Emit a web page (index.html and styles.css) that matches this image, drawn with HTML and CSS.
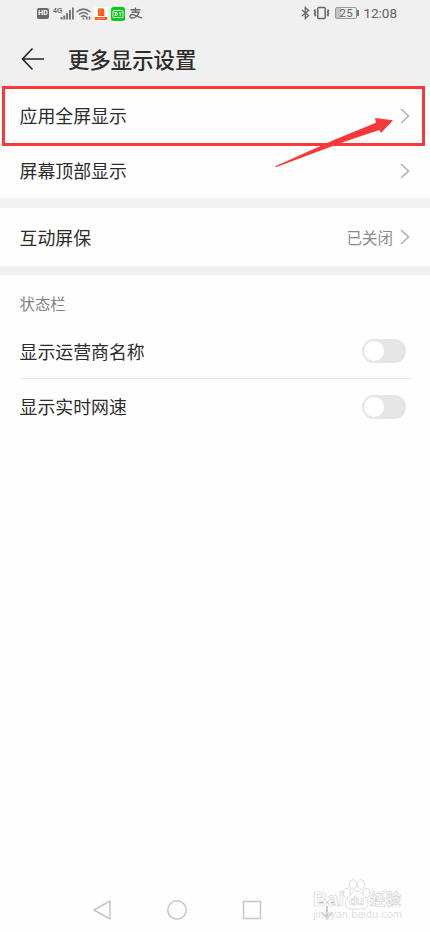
FILE: index.html
```html
<!DOCTYPE html>
<html lang="zh-CN">
<head>
<meta charset="utf-8">
<title>更多显示设置</title>
<link rel="stylesheet" href="styles.css">
</head>
<body>
<main class="screen">
  <header class="header">
    <div class="status">
      <div class="status-left">
        <span class="hd">HD</span>
        <svg class="signal" width="22" height="15" viewBox="0 0 22 15"><text x="0" y="7" class="net">4G</text><g fill="#777"><rect x="7.500" y="11" width="2" height="2.500"/><rect x="10.300" y="9.500" width="2" height="4"/><rect x="13.100" y="7" width="2" height="6.500"/><rect x="16" y="4" width="2" height="9.500"/><rect x="19" y="1.500" width="1.800" height="12"/></g></svg>
        <svg class="wifi" width="16" height="14" viewBox="0 0 16 14" fill="none" stroke="#737373" stroke-width="1.500"><path d="M.5 5Q7.500-.8 14.500 5M3 7.500Q7.500 3.500 12 7.500M5 10Q7.500 7.800 10 10"/><path d="M7.500 10.800v1.800M10.800 9.500v3M13.500 9.500v3" stroke-width="1.600"/></svg>
        <svg class="app" width="14" height="14" viewBox="0 0 14 14"><rect width="14" height="14" rx="2" fill="#fff"/><path d="M4 1.500h5.500l.8 1v6.500H4zM.8 10h12.400v3H.8z" fill="#ff5a10"/><path d="M6 3v4M3 11.500h8" stroke="#ffa67b" stroke-width=".8"/></svg>
        <svg class="app" width="14" height="14" viewBox="0 0 14 14"><rect width="14" height="14" rx="2.500" fill="#05cc18"/><g fill="none" stroke="#fff" stroke-width=".9"><rect x="2" y="3.500" width="10" height="7" rx=".8"/><path d="M3.500 5.500h2.500v3H3.500M4.500 5v4M8 5l1.200 1.500L10.500 5M9.200 6.500v2.500"/></g></svg>
        <svg class="pay" width="14" height="13" viewBox="0 0 14 13" fill="none" stroke="#686868" stroke-width="1.400"><path d="M1.500 2.700h10M6.500.5v5M2.500 5.300h7.500C9 9 5.500 11.500 2.500 11 .2 10.500.7 7.500 3.200 7.500c3 0 5.500 2.500 9.800 3.500"/></svg>
      </div>
      <div class="status-right">
        <svg width="9" height="14" viewBox="0 0 9 14" fill="none" stroke="#666" stroke-width="1.300"><path d="M1 4l6.500 5.500-3.200 3V1.500l3.200 3L1 10"/></svg>
        <svg class="vibrate" width="17" height="14" viewBox="0 0 17 14" fill="none" stroke="#666" stroke-width="1.500"><rect x="4.800" y="1.500" width="7.400" height="11" rx="1"/><path d="M2.500 3.500l-1 1.300 1 1.400-1 1.400 1 1.400-1 1.300M14.500 3.500l1 1.300-1 1.400 1 1.400-1 1.400 1 1.300"/></svg>
        <span class="battery">25</span><i class="battery-tip"></i>
        <span class="clock">12:08</span>
      </div>
    </div>
    <div class="title-row">
      <svg width="24" height="24" viewBox="0 0 24 24" fill="none" stroke="#222" stroke-width="1.600"><path d="M23 12H1.500M11.500 1.500L1.500 12l10 10.500"/></svg>
      <h1>更多显示设置</h1>
    </div>
  </header>
  <section class="group display">
    <div class="row"><span>应用全屏显示</span><svg class="chevron" width="10" height="18" viewBox="0 0 10 18"><path d="M1 2l7.500 7L1 16"/></svg></div>
    <div class="row"><span>屏幕顶部显示</span><svg class="chevron" width="10" height="18" viewBox="0 0 10 18"><path d="M1 2l7.500 7L1 16"/></svg></div>
    <div class="highlight"></div>
    <svg class="pointer" width="120" height="52" viewBox="0 0 120 52"><path fill="#fb3838" d="M.3 49.300L60 22.500 101 5.800 100 1l18 2.300L106 16l-1.600-3L70 24.500.7 50.200z"/></svg>
  </section>
  <section class="group saver">
    <div class="row"><span>互动屏保</span><span class="value">已关闭</span><svg class="chevron" width="10" height="18" viewBox="0 0 10 18"><path d="M1 2l7.500 7L1 16"/></svg></div>
  </section>
  <section class="group bar">
    <h2>状态栏</h2>
    <div class="row divided"><span>显示运营商名称</span><i class="toggle"></i></div>
    <div class="row"><span>显示实时网速</span><i class="toggle"></i></div>
  </section>
  <footer class="nav">
    <svg width="20" height="22" viewBox="0 0 20 22"><path d="M18 2v18L2 11z"/></svg>
    <svg width="22" height="22" viewBox="0 0 22 22"><circle cx="11" cy="11" r="9.200"/></svg>
    <svg width="20" height="22" viewBox="0 0 20 22"><rect x="1.500" y="2.500" width="17" height="17"/></svg>
    <svg class="down" width="18" height="22" viewBox="0 0 18 22"><path d="M1 3.500h16M9 7v12M3.500 13.500L9 19l5.500-5.500"/></svg>
    <svg class="watermark" width="96" height="48" viewBox="0 0 96 48">
      <text class="mark-bai" x="0" y="28" textLength="31" lengthAdjust="spacingAndGlyphs">Bai</text>
      <g class="mark-line"><ellipse cx="34" cy="15" rx="3.500" ry="4.500"/><ellipse cx="40" cy="6.500" rx="3.500" ry="4.800"/><ellipse cx="48" cy="6.500" rx="3.500" ry="4.800"/><ellipse cx="53.500" cy="15" rx="3.500" ry="4.500"/><path d="M43 13c-4 0-5 4-8 7-5 5-3 11 3 11h11c6 0 8-6 4-11-4-4-5-7-10-7z"/></g>
      <text class="mark-du" x="36" y="27" textLength="15">du</text>
      <text class="mark-cn" x="57" y="27" textLength="31">经验</text>
      <text class="mark-url" x="0" y="40" textLength="89">jingyan.baidu.com</text>
    </svg>
  </footer>
</main>
</body>
</html>
```
FILE: styles.css
```css
* { box-sizing: border-box; }
body {
  margin: 0;
  background: #fff;
  color: #2c2c2c;
  font-family: Roboto, "Noto Sans CJK SC", sans-serif;
}
svg { display: block; flex: none; }
.screen { width: 430px; height: 932px; display: flex; flex-direction: column; background: #fefefe; overflow: hidden; }
.header { height: 87px; background: #f0f0f0; flex: none; }
.status { height: 27px; padding: 0 33px 0 37px; display: flex; align-items: center; justify-content: space-between; }
.status-left, .status-right { display: flex; align-items: center; }
.status-right { height: 25px; align-self: flex-start; }
.hd { width: 12px; height: 11px; border-radius: 2px; background: #686868; color: #fff; font-size: 7px; font-weight: 700; line-height: 11px; text-align: center; }
.signal { margin-left: 4px; }
.net { font: 700 7px "Liberation Sans", sans-serif; fill: #666; }
.signal + .wifi { margin-left: 1px; }
.app { margin-left: 2px; }
.app + .app { margin-left: 3px; }
.pay { margin-left: 4px; }
.vibrate { margin-left: 3px; }
.battery { margin-left: 5px; width: 22px; height: 12px; border: 1px solid #999; border-radius: 2px; background: linear-gradient(90deg, #c3c3c3 25%, #eee 25%); color: #666; font-size: 11.5px; line-height: 11px; text-align: center; letter-spacing: .4px; }
.battery-tip { width: 2px; height: 6px; background: #777; }
.clock { margin-left: 4px; font-size: 13.5px; line-height: 20px; color: #626262; padding-top: 1px; }
.title-row { height: 60px; padding: 3px 0 0 21px; display: flex; align-items: center; gap: 23px; }
h1 { margin: 0; font-size: 21.4px; line-height: 30px; font-weight: 500; color: #2c2c2c; padding-top: 5px; }
.group { background: #fefefe; }
.display { height: 111px; position: relative; padding-top: 1px; }
.row { height: 55px; padding: 0 20px; display: flex; align-items: center; justify-content: space-between; font-size: 17.9px; line-height: 26px; }
.row > span { padding-top: 3px; }
.row > span:first-child { flex: 1; margin-left: -0.5px; }
.chevron { fill: none; stroke: #b5b5b5; stroke-width: 1.7; }
.highlight { position: absolute; left: 2px; top: -1px; width: 423px; height: 60px; border: 3px solid #fb3838; }
.pointer { position: absolute; left: 275px; top: 30px; }
.saver { border-top: 10px solid #f2f2f2; border-bottom: 9px solid #f1f1f1; }
.saver .row { height: 58px; }
.value { color: #8b8b8b; font-size: 15.5px; margin-right: 7px; }
h2 { margin: 0; padding: 18px 19.5px 0; height: 49px; color: #828282; font-size: 15.4px; line-height: 24px; font-weight: 400; }
.bar .row { height: 55px; padding-right: 24px; }
.bar .divided { margin: 0 18px 0 20px; padding: 0 6px 0 0; border-bottom: 1px solid #e8e8e8; }
.toggle { width: 44px; height: 24px; border-radius: 12px; background: #e5e5e5; padding: 2px; }
.toggle::before { content: ""; display: block; width: 20px; height: 20px; border-radius: 50%; background: #fff; }
.nav { margin-top: auto; height: 44px; padding-left: 92px; position: relative; display: flex; align-items: center; gap: 54px; }
.nav > svg { fill: none; stroke: #c6c6c6; stroke-width: 1.5; stroke-linejoin: round; }
.nav > .down { margin-left: 2px; stroke: #bbb; }
.nav > .watermark { position: absolute; left: 313px; top: -10px; stroke: none; }
.mark-line { fill: #fefefe; stroke: #dedede; stroke-width: 1; }
.watermark text { font-family: "Liberation Sans", "Noto Sans CJK SC", sans-serif; fill: #fff; stroke: #d6d6d6; stroke-width: .7; font-weight: 700; }
.watermark .mark-bai { font-size: 20px; }
.watermark .mark-du { font-size: 13px; }
.watermark .mark-cn { font-size: 15.5px; }
.watermark .mark-url { font-size: 10.5px; font-weight: 400; fill: #dedede; stroke: none; }
```
